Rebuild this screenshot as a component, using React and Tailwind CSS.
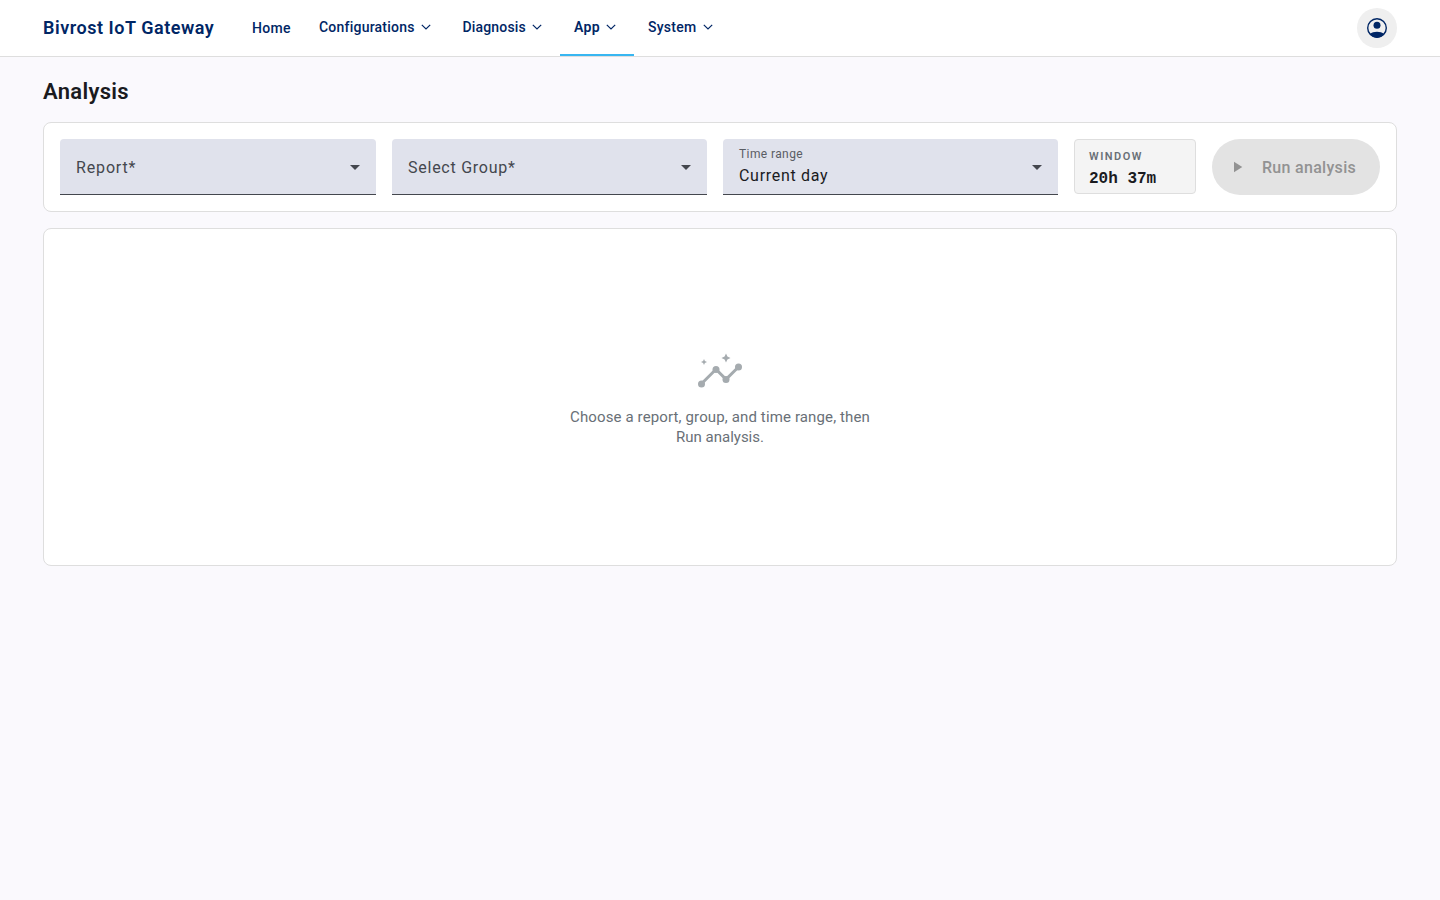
import { MdPlayArrow } from 'react-icons/md';

const NAV = [
  { label: 'Configurations', box: 'w-[143.5px]', text: 'font-medium tracking-[0.22px]' },
  { label: 'Diagnosis', box: 'w-[111.5px]', text: 'font-medium tracking-[0.16px]' },
  { label: 'App', box: 'w-[74px]', text: 'font-semibold tracking-[0.4px]', active: true },
  { label: 'System', box: 'w-[97px]', text: 'font-medium tracking-[0.25px]' },
];

function Chevron() {
  return (
    <svg width="10" height="6" viewBox="0 0 10 6" fill="none" stroke="currentColor" strokeWidth="1.2" className="shrink-0">
      <path d="M0.8 0.8 5 5 9.2 0.8" />
    </svg>
  );
}

function Caret() {
  return (
    <svg width="10" height="5" viewBox="0 0 10 5" className="mt-px shrink-0 fill-[#44474e]">
      <path d="M0 0h10L5 5z" />
    </svg>
  );
}

function Account() {
  return (
    <svg width="24" height="24" viewBox="0 0 24 24" className="text-[#002665]">
      <circle cx="12" cy="12" r="9.3" fill="none" stroke="currentColor" strokeWidth="1.4" />
      <circle cx="12" cy="9.3" r="3.5" fill="currentColor" />
      <path fill="currentColor" d="M4.800 18c1.900-1.600 4.400-2.300 7.200-2.300s5.300.7 7.200 2.300c-1.800 2.400-4.300 3.700-7.200 3.700s-5.400-1.300-7.200-3.700z" />
    </svg>
  );
}

function Insights() {
  return (
    <svg width="48" height="48" viewBox="0 0 48 48" className="fill-[#a5abaf]">
      <path d="M5.500 35.700 20 21.300l10 10 12.700-12.600" fill="none" stroke="#a5abaf" strokeWidth="3" />
      <circle cx="5.500" cy="35.900" r="3.500" />
      <circle cx="20" cy="21.400" r="3.500" />
      <circle cx="30" cy="31.400" r="3.500" />
      <circle cx="42.500" cy="18.900" r="3.500" />
      <path d="M30 5.500l1.400 3.100 3.100 1.400-3.100 1.400L30 14.500l-1.400-3.100-3.100-1.400 3.100-1.400z" />
      <path d="M8 11l.9 2.100 2.100.9-2.100.9L8 17l-.9-2.100L5 14l2.100-.9z" />
    </svg>
  );
}

function Field({ children, box }) {
  return (
    <div className={`flex h-14 shrink-0 items-center justify-between rounded-t-[4px] border-b border-[#44474e] bg-[#e0e2ec] px-4 ${box}`}>
      <div className="whitespace-nowrap">{children}</div>
      <Caret />
    </div>
  );
}

export default function App() {
  return (
    <div className="min-h-screen bg-[#faf9fd] font-['Roboto','Noto_Sans',sans-serif] text-[#1a1b1f]">
      <header className="flex h-[57px] items-stretch border-b border-[#dedede] bg-white px-[43px] text-[#002665]">
        <div className="flex w-[195px] items-center pb-0.5 text-[18px] font-semibold whitespace-nowrap">
          <span className="tracking-[0.53px]">Bivrost IoT Gateway</span>
        </div>
        <nav className="flex items-stretch text-[14px] whitespace-nowrap">
          <a className="flex w-[67px] items-center pl-[14px] font-medium tracking-[0.35px]">Home</a>
          {NAV.map((item) => (
            <a
              key={item.label}
              className={`flex items-center justify-between border-b-2 pr-[18px] pl-[14px] ${item.box} ${item.text} ${item.active ? 'border-[#38b6f1]' : 'border-transparent'}`}
            >
              <span>{item.label}</span>
              <Chevron />
            </a>
          ))}
        </nav>
        <button className="my-2 ml-auto flex size-10 items-center justify-center rounded-full bg-[#efefef]">
          <Account />
        </button>
      </header>

      <main className="px-[43px] pt-[21px]">
        <h1 className="h-11 text-[22px] leading-[28px] font-semibold tracking-[0.3px]">Analysis</h1>

        <section className="flex h-[90px] gap-4 rounded-lg border border-[#dedede] bg-white p-4">
          <Field box="w-[316px]">
            <div className="pt-0.5 text-[16px] tracking-[0.85px] text-[#44474e]">Report*</div>
          </Field>
          <Field box="w-[315px]">
            <div className="pt-0.5 text-[16px] tracking-[0.75px] text-[#44474e]">Select Group*</div>
          </Field>
          <Field box="w-[335px]">
            <div className="text-[12px] leading-4 tracking-[0.4px] text-[#5a5d64]">Time range</div>
            <div className="pt-[2px] text-[16px] leading-6 tracking-[0.7px]">Current day</div>
          </Field>
          <div className="flex h-[55px] w-[122px] shrink-0 flex-col rounded-[4px] border border-[#dedede] bg-[#f4f4f4] pt-[9px] pl-[14px] whitespace-nowrap">
            <span className="text-[11px] leading-4 font-semibold tracking-[1.5px] text-[#697077]">WINDOW</span>
            <span className="pt-px font-['Liberation_Mono',monospace] text-[16px] leading-[26px] font-bold">20h 37m</span>
          </div>
          <button className="flex h-14 w-[168px] shrink-0 items-center rounded-full bg-[#e3e3e3] pl-4 font-medium whitespace-nowrap text-[#929292]">
            <MdPlayArrow className="mr-4 size-[18px]" />
            <span className="pt-0.5 text-[16px] tracking-[0.3px]">Run analysis</span>
          </button>
        </section>

        <section className="mt-4 flex h-[338px] flex-col items-center rounded-lg border border-[#dedede] bg-white pt-[119px]">
          <Insights />
          <p className="mt-[11px] text-center text-[15px] leading-5 whitespace-nowrap text-[#697077]">
            <span className="tracking-[0.13px]">Choose a report, group, and time range, then</span>
            <br />
            Run analysis.
          </p>
        </section>
      </main>
    </div>
  );
}
